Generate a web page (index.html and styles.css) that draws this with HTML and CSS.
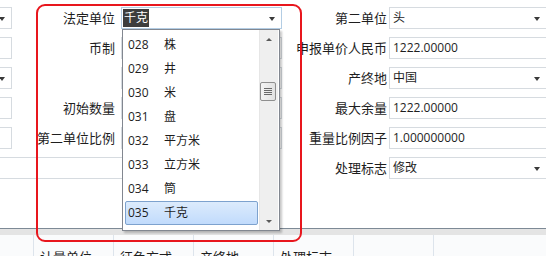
FILE: index.html
```html
<!DOCTYPE html>
<html lang="zh-CN">
<head>
<meta charset="UTF-8" />
<meta name="viewport" content="width=device-width, initial-scale=1" />
<title>商品单位</title>
<link rel="stylesheet" href="styles.css">
</head>
<body>

<!-- Form -->
<div class="form">
  <div class="row">
    <div class="side"><div class="box select"></div></div>
    <div class="label mid">法定单位</div>
    <div class="field mid select focus"><span class="sel">千克</span></div>
    <div class="label right">第二单位</div>
    <div class="field right select">头</div>
  </div>
  <div class="row">
    <div class="side"><div class="box"></div></div>
    <div class="label mid">币制</div>
    <div class="field mid"></div>
    <div class="label right">申报单价人民币</div>
    <div class="field right">1222.00000</div>
  </div>
  <div class="row">
    <div class="side"><div class="box select"></div></div>
    <div class="label mid"></div>
    <div class="field mid"></div>
    <div class="label right">产终地</div>
    <div class="field right select">中国</div>
  </div>
  <div class="row">
    <div class="side"><div class="box"></div></div>
    <div class="label mid">初始数量</div>
    <div class="field mid"></div>
    <div class="label right">最大余量</div>
    <div class="field right">1222.00000</div>
  </div>
  <div class="row">
    <div class="side"><div class="box"></div></div>
    <div class="label mid">第二单位比例</div>
    <div class="field mid"></div>
    <div class="label right">重量比例因子</div>
    <div class="field right">1.000000000</div>
  </div>
  <div class="row">
    <div class="side"><div class="box wide"></div></div>
    <div class="label mid"></div>
    <div class="spacer"></div>
    <div class="label right">处理标志</div>
    <div class="field right select">修改</div>
  </div>
</div>

<!-- Grid header -->
<div class="band"></div>
<div class="head">
  <div class="cell first"></div>
  <div class="cell">计量单位</div>
  <div class="cell">征免方式</div>
  <div class="cell">产终地</div>
  <div class="cell">处理标志</div>
  <div class="cell"></div>
</div>

<!-- Open dropdown -->
<div class="dropdown">
  <ul class="list">
    <li><span class="code">028</span>株</li>
    <li><span class="code">029</span>井</li>
    <li><span class="code">030</span>米</li>
    <li><span class="code">031</span>盘</li>
    <li><span class="code">032</span>平方米</li>
    <li><span class="code">033</span>立方米</li>
    <li><span class="code">034</span>筒</li>
    <li class="active"><span class="code">035</span>千克</li>
  </ul>
  <div class="scroll">
    <div class="btn up"></div>
    <div class="track"><div class="thumb"><i></i><i></i><i></i><i></i></div></div>
    <div class="btn down"></div>
  </div>
</div>

<!-- Annotation -->
<div class="mark"></div>

</body>
</html>
```

FILE: styles.css
```css
* {
  box-sizing: border-box;
}

body {
  margin: 0;
  width: 546px;
  height: 256px;
  overflow: hidden;
  position: relative;
  background: #fff;
  font-family: "Open Sans", "Noto Sans CJK SC", sans-serif;
  font-size: 12px;
  color: #1e1e1e;
}

/* Form rows */
.form {
  height: 229px;
  padding-top: 7px;
  border-bottom: 1px solid #7d8a96;
  display: flex;
  flex-direction: column;
  gap: 8px;
}

.row {
  display: flex;
  height: 22px;
}

.side {
  width: 12px;
  flex: none;
}

.box {
  position: relative;
  width: 62px;
  height: 22px;
  margin-left: -50px;
  border: 1px solid #d6dbe0;
  background: #fff;
}

.box.wide {
  width: 300px;
}

.label {
  flex: none;
  font-family: "Noto Sans CJK SC", sans-serif;
  font-size: 13px;
  line-height: 22px;
  text-align: right;
  white-space: nowrap;
}

.label.mid {
  width: 109px;
  padding-right: 6px;
}

.label.right {
  width: 107px;
  padding-right: 2px;
}

.spacer {
  width: 161px;
  flex: none;
}

.field {
  position: relative;
  flex: none;
  height: 22px;
  border: 1px solid #d6dbe0;
  padding-left: 3px;
  line-height: 20px;
  white-space: nowrap;
}

.field.mid {
  width: 161px;
}

.field.right {
  width: 158px;
}

.field.focus {
  border-color: #b3cde4;
  padding-left: 1px;
  padding-top: 1px;
}

.sel {
  display: inline-block;
  padding: 0 1px;
  line-height: 18px;
  background: #3d3d3d;
  color: #fff;
  vertical-align: top;
}

.select::after {
  content: "";
  position: absolute;
  right: 6px;
  top: 9px;
  border-left: 3px solid transparent;
  border-right: 3px solid transparent;
  border-top: 4px solid #3a3a3a;
}

/* Grid header */
.band {
  height: 6px;
  background: #e4e4e4;
}

.head {
  display: flex;
  height: 21px;
  background: #fafbfc;
}

.head .cell {
  flex: none;
  width: 80px;
  border-right: 1px solid #dde4ec;
  padding: 13px 0 0 6px;
  font-family: "Noto Sans CJK SC", sans-serif;
  font-size: 13px;
  line-height: 18px;
  white-space: nowrap;
}

.head .cell.first {
  width: 34px;
}

/* Dropdown list */
.dropdown {
  position: absolute;
  left: 122px;
  top: 29px;
  width: 158px;
  height: 202px;
  border: 1px solid #828790;
  background: #fff;
  box-shadow: 2px 2px 2px rgba(0,0,0,0.22);
  display: flex;
}

.list {
  flex: 1;
  margin: 0;
  padding: 3px 1px 0 2px;
  list-style: none;
}

.list li {
  height: 24px;
  padding-left: 2px;
  border: 1px solid transparent;
  border-radius: 2px;
  line-height: 22px;
  white-space: nowrap;
}

.list li.active {
  border-color: #7da2ce;
  background: linear-gradient(#dcebfc, #c1dbfc);
}

.code {
  display: inline-block;
  width: 36px;
}

.scroll {
  width: 19px;
  flex: none;
  margin-right: 1px;
  background: #efefef;
  border-left: 1px solid #e6e6e6;
  display: flex;
  flex-direction: column;
}

.btn {
  position: relative;
  height: 20px;
}

.btn::after {
  content: "";
  position: absolute;
  left: 6px;
  top: 8px;
  border-left: 3px solid transparent;
  border-right: 3px solid transparent;
}

.btn.up::after {
  border-bottom: 3px solid #5a5a5a;
}

.btn.down::after {
  top: 10px;
  border-top: 3px solid #5a5a5a;
}

.track {
  flex: 1;
}

.thumb {
  width: 16px;
  height: 19px;
  margin-top: 32px;
  border: 1px solid #8f8f8f;
  border-radius: 2px;
  background: linear-gradient(90deg, #f4f4f4, #e2e2e2);
  display: flex;
  flex-direction: column;
  align-items: center;
  justify-content: center;
  gap: 1px;
}

.thumb i {
  width: 8px;
  height: 1px;
  background: #6a6a6a;
}

/* Red annotation outline */
.mark {
  position: absolute;
  left: 36px;
  top: 4px;
  width: 266px;
  height: 238px;
  border: 2px solid #e8161d;
  border-radius: 9px;
}
```
